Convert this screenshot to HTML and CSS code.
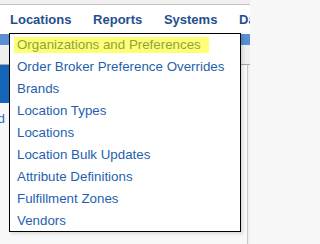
FILE: index.html
```html
<!DOCTYPE html>
<html>
<head>
<meta charset="utf-8">
<link rel="stylesheet" href="styles.css">
</head>
<body>
<div class="page">
  <div class="topstrip"></div>
  <nav class="nav">
    <a class="nav-item">Locations</a>
    <a class="nav-item">Reports</a>
    <a class="nav-item">Systems</a>
    <a class="nav-item">Dashboard</a>
  </nav>
  <div class="band"></div>
  <div class="subbar"></div>
  <div class="main">
    <div class="sidebar">
      <div class="side-tab"></div>
      <div class="side-link"><span>Add</span></div>
    </div>
    <div class="content"></div>
  </div>
  <ul class="dropdown">
    <li><a class="active">Organizations and Preferences</a></li>
    <li><a>Order Broker Preference Overrides</a></li>
    <li><a>Brands</a></li>
    <li><a>Location Types</a></li>
    <li><a>Locations</a></li>
    <li><a>Location Bulk Updates</a></li>
    <li><a>Attribute Definitions</a></li>
    <li><a>Fulfillment Zones</a></li>
    <li><a>Vendors</a></li>
  </ul>
</div>
</body>
</html>
```

FILE: styles.css
```css
html, body {
  margin: 0;
  padding: 0;
  background: #f7f7f7;
  font-family: "Liberation Sans", Arial, sans-serif;
  overflow: hidden;
}
.page {
  position: relative;
  width: 250px;
  height: 244px;
  overflow: hidden;
  display: flex;
  flex-direction: column;
}
.topstrip {
  height: 4px;
  background: #f0f0f0;
  border-bottom: 1px solid #c4c4c4;
}
.nav {
  height: 29px;
  background: #ffffff;
  display: flex;
  align-items: flex-start;
  gap: 21.7px;
  padding-left: 10px;
  white-space: nowrap;
  overflow: hidden;
}
.nav-item {
  font-size: 13px;
  font-weight: bold;
  color: #1f4f8f;
  line-height: 29px;
}
.band {
  height: 11px;
  background: #5a8fd6;
}
.subbar {
  height: 19px;
  background: #efefef;
  border-bottom: 1px solid #a9a9a9;
}
.main {
  flex: 1;
  display: flex;
  background: #efefef;
}
.sidebar {
  width: 9px;
  background: #f8f8f8;
}
.side-tab {
  height: 38px;
  background: #1565b8;
}
.side-link {
  width: 5px;
  margin-top: 8px;
  display: flex;
  justify-content: flex-end;
  overflow: hidden;
  font-size: 13.33px;
  color: #1f6fd0;
  white-space: nowrap;
  line-height: 16px;
}
.content {
  width: 238px;
  background: #f8f8f8;
  border-right: 1px solid #c8c8c8;
}
.dropdown {
  position: absolute;
  left: 9px;
  top: 33px;
  width: 226px;
  margin: 0;
  padding: 0 0 0 4px;
  list-style: none;
  background: #ffffff;
  border: 1px solid #000000;
  box-shadow: 2px 2px 3px rgba(0, 0, 0, 0.12);
}
.dropdown li {
  height: 22px;
  padding-top: 1px;
  box-sizing: border-box;
}
.dropdown li:last-child {
  height: 21px;
}
.dropdown a {
  display: inline-block;
  height: 16px;
  line-height: 16px;
  padding: 0 8px 0 3px;
  font-size: 13.33px;
  color: #1f5fae;
  white-space: nowrap;
}
.dropdown a.active {
  background: #ffff77;
  color: #8da33c;
}
```
